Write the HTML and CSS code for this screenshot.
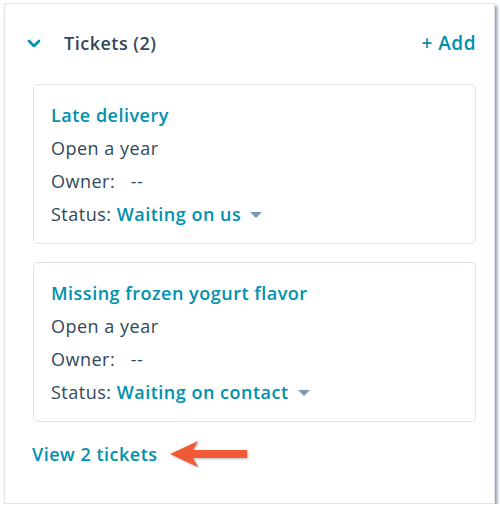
FILE: index.html
```html
<!DOCTYPE html>
<html lang="en">
<head>
    <meta charset="UTF-8">
    <title>Tickets</title>
    <link rel="stylesheet" href="styles.css">
</head>
<body>
    <div class="panel">
        <div class="panel-header">
            <div class="header-left">
                <svg class="chevron" width="14" height="9" viewBox="0 0 14 9">
                    <path d="M2 2 L7 7 L12 2" fill="none" stroke="#0091ae" stroke-width="2.6" stroke-linecap="round" stroke-linejoin="round"/>
                </svg>
                <span class="panel-title">Tickets (2)</span>
            </div>
            <span class="add-link">+ Add</span>
        </div>

        <div class="ticket-card">
            <div class="ticket-title">Late delivery</div>
            <div class="ticket-line">Open a year</div>
            <div class="ticket-line">Owner:&nbsp;&nbsp; --</div>
            <div class="ticket-line">Status: <span class="status">Waiting on us</span> <span class="caret"></span></div>
        </div>

        <div class="ticket-card">
            <div class="ticket-title">Missing frozen yogurt flavor</div>
            <div class="ticket-line">Open a year</div>
            <div class="ticket-line">Owner:&nbsp;&nbsp; --</div>
            <div class="ticket-line">Status: <span class="status">Waiting on contact</span> <span class="caret"></span></div>
        </div>

        <div class="view-row">
            <span class="view-link">View 2 tickets</span>
            <svg class="arrow" width="82" height="34" viewBox="0 0 82 34">
                <path d="M2 17 L30 4 L25 13 L79 13 L79 21 L25 21 L30 30 Z" fill="#f05a36"/>
            </svg>
        </div>
    </div>
</body>
</html>
```

FILE: styles.css
```css
body {
    margin: 0;
    background: #ffffff;
    font-family: 'Open Sans', 'Lato', sans-serif;
    letter-spacing: 0.5px;
}

.panel {
    margin: 3px 0 0 4px;
    width: 491px;
    height: 501px;
    box-sizing: border-box;
    background: #ffffff;
    border: 1px solid #dfe3eb;
    box-shadow: 2px 3px 3px rgba(70, 90, 120, 0.65);
    padding: 0 18px 0 22px;
}

.panel-header {
    display: flex;
    align-items: center;
    justify-content: space-between;
    height: 78px;
}

.header-left {
    display: flex;
    align-items: center;
}

.chevron {
    margin-right: 23px;
    margin-top: 1px;
}

.panel-title {
    font-size: 18px;
    font-weight: 600;
    color: #33475b;
}

.add-link {
    font-size: 19px;
    font-weight: 600;
    color: #0091ae;
}

.ticket-card {
    margin: 2px 0 18px 6px;
    border: 1px solid #dfe3eb;
    border-radius: 4px;
    padding: 14px 17px 12px;
}

.ticket-title {
    font-size: 18px;
    font-weight: 600;
    color: #0091ae;
    line-height: 33px;
}

.ticket-line {
    font-size: 18px;
    color: #33475b;
    line-height: 33px;
}

.status {
    color: #0091ae;
    font-weight: 600;
}

.caret {
    display: inline-block;
    width: 0;
    height: 0;
    border-left: 6px solid transparent;
    border-right: 6px solid transparent;
    border-top: 6px solid #7c98b6;
    vertical-align: middle;
    margin-left: 4px;
    margin-bottom: 3px;
}

.view-row {
    display: flex;
    align-items: center;
    margin: -3px 0 0 5px;
}

.view-link {
    font-size: 18px;
    font-weight: 600;
    color: #0091ae;
}

.arrow {
    margin-left: 10px;
    filter: drop-shadow(1px 1px 1px rgba(0, 0, 0, 0.3));
}
```
